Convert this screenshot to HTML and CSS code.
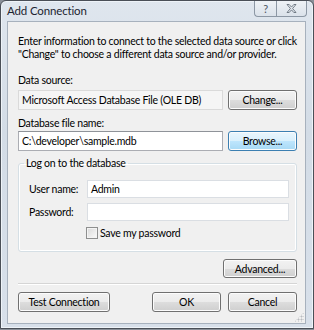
FILE: index.html
```html
<!DOCTYPE html>
<html>
<head>
<meta charset="utf-8">
<link rel="stylesheet" href="styles.css">
</head>
<body>
<div class="window">
  <div class="titlebar">
    <span class="title">Add Connection</span>
    <div class="caption">
      <span class="cap cap-help">?</span>
      <span class="cap cap-close">
        <svg width="11" height="9" viewBox="0 0 11 9"><path d="M1 0.5h2.2l2.3 2.6 2.3-2.6h2.2l-3.4 4 3.4 4h-2.2l-2.3-2.6-2.3 2.6h-2.2l3.4-4z" fill="none" stroke="#5a6470" stroke-width="0.8"/></svg>
      </span>
    </div>
  </div>
  <div class="client">
    <p class="intro">Enter information to connect to the selected data source or click<br>"Change" to choose a different data source and/or provider.</p>
    <div class="label label-first">Data source:</div>
    <div class="row">
      <div class="field readonly">Microsoft Access Database File (OLE DB)</div>
      <button class="btn">Change...</button>
    </div>
    <div class="label label-second">Database file name:</div>
    <div class="row row-second">
      <div class="field">C:\developer\sample.mdb</div>
      <button class="btn focus">Browse...</button>
    </div>
    <fieldset class="group">
      <legend>Log on to the database</legend>
      <div class="frow frow-first">
        <span class="flabel">User name:</span>
        <div class="field wide">Admin</div>
      </div>
      <div class="frow">
        <span class="flabel">Password:</span>
        <div class="field wide"></div>
      </div>
      <div class="check">
        <span class="box"></span>
        <span>Save my password</span>
      </div>
    </fieldset>
    <div class="adv-row">
      <button class="btn adv">Advanced...</button>
    </div>
    <div class="sep"></div>
    <div class="bottom">
      <button class="btn test">Test Connection</button>
      <div class="right">
        <button class="btn">OK</button>
        <button class="btn">Cancel</button>
      </div>
    </div>
    <div class="grip"></div>
  </div>
</div>
</body>
</html>
```
FILE: styles.css
```css
html, body { margin: 0; padding: 0; }
body {
  width: 314px; height: 330px; overflow: hidden;
  font-family: "Lato", "Open Sans", sans-serif;
  font-size: 10.5px;
  letter-spacing: -0.25px;
  color: #000;
  background: #8a9099;
}
.window {
  box-sizing: border-box;
  width: 314px; height: 329px;
  border: 1px solid #4a4f57;
  border-radius: 6px 6px 0 0;
  background: linear-gradient(#dfe6ee, #d3dce6 40%, #d8e0ea);
  box-shadow: inset 0 0 0 1px #eef3f8;
  padding: 0 7px 4px 6px;
  display: flex; flex-direction: column;
}
.titlebar {
  height: 20px; flex: none;
  display: flex; align-items: flex-start; justify-content: space-between;
}
.title {
  margin-top: 3px;
  font-size: 11.5px;
  letter-spacing: -0.15px;
  line-height: 14px;
  color: #1c2430;
}
.caption { display: flex; margin-right: -1px; margin-top: 0; }
.cap {
  box-sizing: border-box;
  height: 16px;
  display: flex; align-items: center; justify-content: center;
  border: 1px solid #8c97a4;
  border-top: none;
  background: linear-gradient(#eef2f6, #dbe2ea);
  color: #4d5865;
  font-size: 11px;
}
.cap-help { width: 22px; border-radius: 0 0 0 4px; border-right: none; }
.cap-close { width: 31px; border-radius: 0 0 4px 0; }
.client {
  flex: 1;
  position: relative;
  border: 1px solid #a7b1bd;
  background: #f0f0f0;
  padding: 13px 7px 0 10px;
  white-space: nowrap;
}
.intro {
  margin: 0;
  line-height: 13px;
}
.label { line-height: 14px; }
.label-first { margin-top: 12px; }
.label-second { margin-top: 6px; }
.row { display: flex; justify-content: space-between; align-items: center; width: 279px; margin-top: 3px; }
.row-second { margin-top: 1px; }
.field {
  box-sizing: border-box;
  width: 205px; height: 20px;
  border: 1px solid #abadb3;
  border-top-color: #8f9399;
  background: #fff;
  padding: 0 3px;
  line-height: 18px;
  white-space: nowrap; overflow: hidden;
}
.field.readonly { background: #f5f5f5; border-color: #dadada; }
.btn {
  box-sizing: border-box;
  width: 69px; height: 20px;
  border: 1px solid #707070;
  border-radius: 3px;
  background: linear-gradient(#f2f2f2 0, #ebebeb 50%, #dddddd 50%, #cfcfcf 100%);
  box-shadow: inset 0 0 0 1px #fcfcfc;
  font-family: inherit; font-size: 10.5px; letter-spacing: -0.25px; color: #000;
  padding: 0;
}
.btn.focus {
  border-color: #3c7fb1;
  background: linear-gradient(#eaf6fd 0, #d9f0fc 50%, #bee6fd 50%, #a7d9f5 100%);
}
.group {
  margin: 5px 0 0 0;
  padding: 0 7px 12px 10px;
  border: 1px solid #d5dfe5;
  border-radius: 3px;
  width: 279px; box-sizing: border-box;
  box-shadow: inset 0 0 0 1px #fff;
}
.group legend { padding: 0 2px; margin-left: -5px; line-height: 14px; }
.frow { display: flex; align-items: center; justify-content: space-between; margin-top: 5px; }
.frow-first { margin-top: 10px; }
.flabel { line-height: 14px; }
.field.wide { width: 202px; height: 18px; border-color: #dadee3; line-height: 16px; }
.check { display: flex; align-items: center; gap: 2px; margin: 6px 0 0 57px; line-height: 12px; }
.box {
  box-sizing: border-box; width: 12px; height: 12px;
  border: 1px solid #8e8f8f;
  background: linear-gradient(135deg, #d9d9d9, #fbfbfb);
  box-shadow: inset 0 0 0 1px #f4f4f4;
}
.adv-row { display: flex; justify-content: flex-end; margin-top: 7px; width: 279px; }
.btn.adv { width: 74px; height: 19px; }
.sep { margin-top: 5px; height: 0; border-top: 1px solid #d5d5d5; border-bottom: 1px solid #fff; width: 279px; }
.bottom { display: flex; justify-content: space-between; margin-top: 7px; width: 279px; }
.btn.test { width: 92px; }
.right { display: flex; gap: 7px; }
.grip {
  position: absolute; right: 1px; bottom: 1px; width: 10px; height: 10px;
  background: radial-gradient(circle, #b9bcc0 0.8px, transparent 1.2px) 0 0 / 3px 3px;
  clip-path: polygon(100% 0, 100% 100%, 0 100%);
}
```
